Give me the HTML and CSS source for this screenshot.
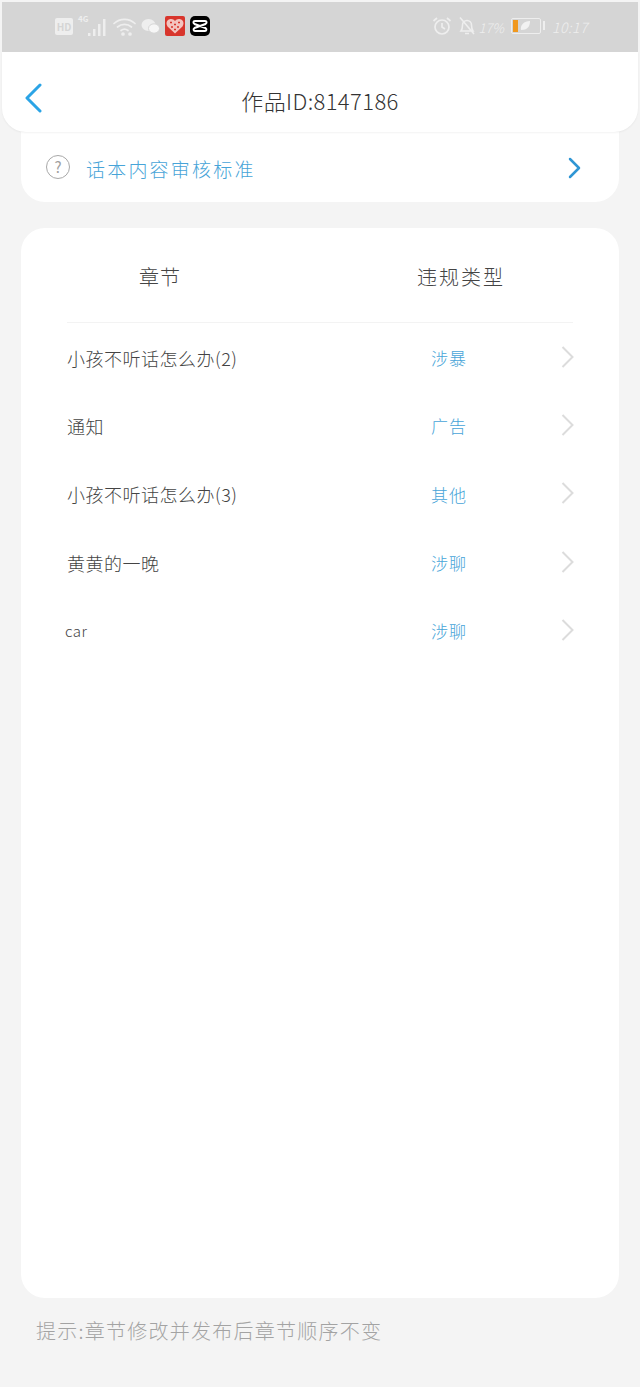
FILE: index.html
```html
<!DOCTYPE html>
<html lang="zh-CN">

<head>
    <meta charset="UTF-8">
    <meta name="viewport" content="width=device-width, initial-scale=1.0">
    <title>作品ID:8147186</title>
    <link rel="stylesheet" href="styles.css">
</head>

<body>
    <div class="status-bar">
        <div class="status-left">
            <span class="hd">HD</span>
            <span class="signal">
                <span class="net">4G</span>
                <svg width="20" height="18" viewBox="0 0 20 18"><path d="M1 15h2.500v3H1zM6 11h2.500v7H6zM11 6h2.500v12H11zM16 1h2.500v17H16z" fill="#eee"/></svg>
            </span>
            <svg class="wifi" width="23" height="19" viewBox="0 0 23 19" fill="none" stroke="#eee" stroke-width="1.7" stroke-linecap="round"><path d="M1 6.500c6-5.600 15-5.600 21 0"/><path d="M4.500 10c4-3.500 10-3.500 14 0"/><path d="M8 13.500c2-1.500 5-1.500 7 0"/><circle cx="10" cy="17" r="1" fill="#eee"/><circle cx="17" cy="17" r="1" fill="#eee"/></svg>
            <svg class="wechat" width="19" height="17" viewBox="0 0 19 17"><ellipse cx="7.500" cy="7" rx="7" ry="6" fill="#eee"/><ellipse cx="13" cy="10.500" rx="5.500" ry="4.700" fill="#f6f6f6" stroke="#d5d5d5"/></svg>
            <span class="app app-red">
                <svg width="18" height="16" viewBox="0 0 18 16"><path d="M9 15.500 1.500 8.500C-.5 5.500.5 1.500 4.500 1 6.500.8 8 1.600 9 3c1-1.400 2.500-2.200 4.500-2 4 .5 5 4.500 3 7.500z" fill="#f3c4bf"/><path d="M4 4.500h2M8 6.500h2M12 4.500h2M5 9h2M11 9h2M8 11.500h2" stroke="#d8352c" stroke-width="1.300"/></svg>
            </span>
            <span class="app app-black">
                <svg width="16" height="14" viewBox="0 0 16 14" fill="none" stroke="#fff" stroke-width="2"><path d="M3 2h10c2 0 2 2 .5 3l-11 4c-1.500 1-1 3 .5 3h10c1.500 0 2-2 .5-3l-11-4C1 4 1 2 3 2z"/></svg>
            </span>
        </div>
        <div class="status-right">
            <svg width="20" height="20" viewBox="0 0 20 20" fill="none" stroke="#eee" stroke-width="1.700"><circle cx="10" cy="11" r="7"/><path d="M10 7v4l3 2M1.500 5 5 2M18.500 5 15 2"/></svg>
            <svg class="bell" width="18" height="20" viewBox="0 0 18 20" fill="none" stroke="#eee" stroke-width="1.600"><path d="M3 15c1.500-2 1.500-4 1.500-6 0-2.500 2-4.500 4.500-4.500S13.500 6.500 13.500 9c0 2 0 4 1.500 6zM7 17.500h4M2 1.500 16 18"/></svg>
            <span class="percent">17%</span>
            <span class="battery">
                <span class="battery-level"></span>
                <svg width="10" height="9" viewBox="0 0 10 9"><path d="M1 9C0 4 4 0 10 0c0 6-3 9-9 9z" fill="#f2f2f2"/></svg>
            </span>
            <span class="battery-tip"></span>
            <span class="clock">10:17</span>
        </div>
    </div>

    <header class="header">
        <a class="back">
            <svg width="18" height="32" viewBox="0 0 18 32" fill="none" stroke="#2ba4e6" stroke-width="3" stroke-linecap="round" stroke-linejoin="round"><path d="M15 3 2 16l13 13"/></svg>
        </a>
        <h1 class="title">作品ID:8147186</h1>
    </header>

    <main class="content">
        <section class="standard">
            <span class="help">?</span>
            <span class="standard-text">话本内容审核标准</span>
            <svg class="standard-arrow" width="13" height="22" viewBox="0 0 13 22" fill="none" stroke="#2f96d4" stroke-width="2.500" stroke-linecap="round" stroke-linejoin="round"><path d="M2 2l9 9-9 9"/></svg>
        </section>

        <section class="chapters">
            <div class="chapters-head">
                <span class="head-name">章节</span>
                <span class="head-type">违规类型</span>
            </div>
            <div class="row">
                <span class="row-name">小孩不听话怎么办(2)</span>
                <span class="row-type">涉暴</span>
                <svg class="row-arrow" width="13" height="22" viewBox="0 0 13 22" fill="none" stroke="#dcdcdc" stroke-width="2"><path d="M1.500 1 11.500 11l-10 10"/></svg>
            </div>
            <div class="row">
                <span class="row-name">通知</span>
                <span class="row-type">广告</span>
                <svg class="row-arrow" width="13" height="22" viewBox="0 0 13 22" fill="none" stroke="#dcdcdc" stroke-width="2"><path d="M1.500 1 11.500 11l-10 10"/></svg>
            </div>
            <div class="row">
                <span class="row-name">小孩不听话怎么办(3)</span>
                <span class="row-type">其他</span>
                <svg class="row-arrow" width="13" height="22" viewBox="0 0 13 22" fill="none" stroke="#dcdcdc" stroke-width="2"><path d="M1.500 1 11.500 11l-10 10"/></svg>
            </div>
            <div class="row">
                <span class="row-name">黄黄的一晚</span>
                <span class="row-type">涉聊</span>
                <svg class="row-arrow" width="13" height="22" viewBox="0 0 13 22" fill="none" stroke="#dcdcdc" stroke-width="2"><path d="M1.500 1 11.500 11l-10 10"/></svg>
            </div>
            <div class="row">
                <span class="row-name row-latin">car</span>
                <span class="row-type">涉聊</span>
                <svg class="row-arrow" width="13" height="22" viewBox="0 0 13 22" fill="none" stroke="#dcdcdc" stroke-width="2"><path d="M1.500 1 11.500 11l-10 10"/></svg>
            </div>
        </section>

        <p class="tip">提示:章节修改并发布后章节顺序不变</p>
    </main>
</body>

</html>
```
FILE: styles.css
```css
html {
    box-sizing: border-box;
    font-family: "Noto Sans CJK SC", "Noto Sans", sans-serif;
    font-size: 16px;
}

*,
*::before,
*::after {
    box-sizing: inherit;
}

body {
    margin: 0;
    height: 1387px;
    overflow: hidden;
    padding-top: 2px;
    background-color: #f4f4f4;
    display: flex;
    flex-direction: column;
}

svg {
    display: block;
    flex-shrink: 0;
}

.status-bar {
    height: 50px;
    margin: 0 2px;
    padding: 0 50px 0 53px;
    background-color: #d5d5d5;
    display: flex;
    justify-content: space-between;
    align-items: center;
}

.status-left,
.status-right {
    display: flex;
    align-items: center;
}

.status-left {
    margin-top: -2px;
}

.hd {
    width: 18px;
    height: 17px;
    border-radius: 2px;
    background-color: #eee;
    color: #d5d5d5;
    font-size: 10px;
    font-weight: 700;
    line-height: 17px;
    text-align: center;
}

.signal {
    display: flex;
    align-items: flex-end;
    margin-left: 5px;
    position: relative;
    width: 30px;
    height: 20px;
    justify-content: flex-end;
    padding-right: 1px;
}

.net {
    position: absolute;
    left: 0;
    top: -3px;
    color: #eee;
    font-size: 8px;
    font-weight: 700;
}

.wifi {
    margin-left: 5px;
}

.wechat {
    margin-left: 5px;
}

.app {
    width: 20px;
    height: 20px;
    display: flex;
    align-items: center;
    justify-content: center;
}

.app-red {
    margin-left: 5px;
    background-color: #d8352c;
    border-radius: 2px;
}

.app-black {
    margin-left: 5px;
    background-color: #000;
    border-radius: 5px;
}

.status-right {
    color: #eee;
    margin-top: -3px;
}

.bell {
    margin-left: 6px;
}

.percent {
    margin: 3px 0 0 2px;
    font-size: 13px;
    font-style: italic;
    font-weight: 300;
}

.battery {
    width: 30px;
    height: 16px;
    margin-left: 7px;
    padding: 1px;
    border: 1px solid #eee;
    border-radius: 2px;
    display: flex;
    align-items: center;
    gap: 2px;
}

.battery-level {
    width: 5px;
    height: 12px;
    background-color: #f0981e;
}

.battery-tip {
    width: 2px;
    height: 9px;
    margin-left: 2px;
    background-color: #eee;
}

.clock {
    margin: 3px 0 0 7px;
    font-size: 14px;
    font-style: italic;
    font-weight: 300;
    letter-spacing: .5px;
}

.header {
    height: 80px;
    margin: 0 2px;
    padding-left: 23px;
    border-radius: 0 0 24px 24px;
    background-color: #fff;
    box-shadow: 0 1px 2px rgba(0, 0, 0, .05);
    display: flex;
    align-items: center;
    position: relative;
    z-index: 1;
}

.back {
    margin-top: 11px;
}

.title {
    margin: 0 0 -16px;
    position: absolute;
    left: 0;
    right: 0;
    text-align: center;
    color: #333;
    font-size: 22px;
    font-weight: 300;
    line-height: 24px;
    letter-spacing: .4px;
}

.content {
    flex-grow: 1;
    padding: 0 21px;
    display: flex;
    flex-direction: column;
}

.standard {
    height: 70px;
    padding: 0 38px 0 25px;
    border-radius: 0 0 24px 24px;
    background-color: #fff;
    display: flex;
    align-items: center;
}

.help {
    width: 24px;
    height: 24px;
    border: 1px solid #a8a8a8;
    border-radius: 50%;
    color: #a0a0a0;
    font-size: 15px;
    line-height: 21px;
    text-align: center;
}

.standard-text {
    margin: 3px 0 0 16px;
    color: #47a4d8;
    font-size: 19px;
    font-weight: 300;
    letter-spacing: 2.2px;
    flex-grow: 1;
}

.standard-arrow {
    margin-top: 2px;
}

.chapters {
    height: 1070px;
    margin-top: 26px;
    padding: 0 46px;
    border-radius: 24px;
    background-color: #fff;
}

.chapters-head {
    height: 95px;
    padding-top: 3px;
    border-bottom: 1px solid #f3f3f3;
    display: grid;
    grid-template-columns: 186px 1fr;
    align-items: center;
    color: #444;
    font-size: 20px;
    font-weight: 300;
}

.head-name {
    text-align: center;
    letter-spacing: 1px;
}

.head-type {
    padding-left: 164px;
    letter-spacing: 2px;
    white-space: nowrap;
}

.row {
    height: 68.3px;
    display: grid;
    grid-template-columns: 291px 203px 1fr;
    align-items: center;
}

.row-name {
    margin-top: 1px;
    color: #444;
    font-size: 18px;
    font-weight: 300;
    letter-spacing: .5px;
    white-space: nowrap;
}

.row-latin {
    margin-left: -2px;
    font-size: 15px;
}

.row-type {
    margin-top: 1px;
    padding-left: 73px;
    color: #47a4d8;
    font-size: 17px;
    font-weight: 300;
    letter-spacing: 1px;
}

.row-arrow {
    margin-top: -1px;
}

.tip {
    margin: 20px 0 0 15px;
    color: #a3a3a3;
    font-size: 20px;
    font-weight: 300;
    line-height: 26px;
    letter-spacing: 1.25px;
    white-space: nowrap;
}
```
